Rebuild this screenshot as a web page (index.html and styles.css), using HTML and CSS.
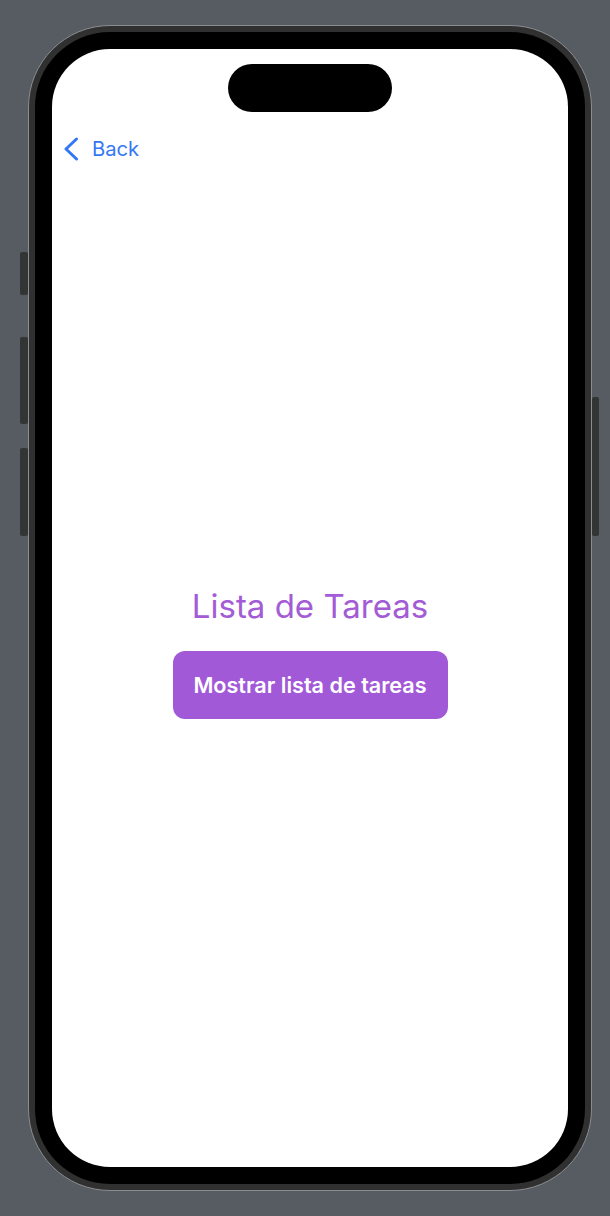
FILE: index.html
```html
<!DOCTYPE html>
<html lang="es">
<head>
<meta charset="utf-8">
<title>Lista de Tareas</title>
<link rel="stylesheet" href="styles.css">
</head>
<body>
<div class="stage">
  <div class="phone">
    <span class="side-btn btn-action"></span>
    <span class="side-btn btn-vol-up"></span>
    <span class="side-btn btn-vol-down"></span>
    <span class="side-btn btn-power"></span>
    <div class="bezel">
      <div class="screen">
        <div class="island"></div>
        <nav class="nav">
          <a class="back" href="#">
            <svg class="chevron" width="16" height="24" viewBox="0 0 16 24" aria-hidden="true">
              <polyline points="13.5,2 3,12 13.5,22" fill="none" stroke="currentColor" stroke-width="3" stroke-linecap="round" stroke-linejoin="round"/>
            </svg>
            <span>Back</span>
          </a>
        </nav>
        <main class="content">
          <h1 class="title">Lista de Tareas</h1>
          <button class="show-btn" type="button">Mostrar lista de tareas</button>
        </main>
      </div>
    </div>
  </div>
</div>
</body>
</html>
```

FILE: styles.css
```css
* { box-sizing: border-box; }

html, body {
  margin: 0;
  padding: 0;
  background: #575c63;
  width: 610px;
  height: 1216px;
  overflow: hidden;
  font-family: Inter, "Noto Sans", "Liberation Sans", sans-serif;
}

.stage {
  padding: 25px 0 0 28px;
}

.phone {
  position: relative;
  width: 564px;
  height: 1166px;
  border: 1px solid #8b8d90;
  border-radius: 82px;
  background: #303030;
  padding: 6px;
}

.side-btn {
  position: absolute;
  background: #333434;
  border-radius: 2px;
}
.btn-action { left: -9px; top: 226px; width: 8px; height: 43px; }
.btn-vol-up { left: -9px; top: 311px; width: 8px; height: 87px; }
.btn-vol-down { left: -9px; top: 422px; width: 8px; height: 88px; }
.btn-power { right: -8px; top: 371px; width: 7px; height: 139px; }

.bezel {
  width: 100%;
  height: 100%;
  background: #000;
  border-radius: 75px;
  padding: 17px;
}

.screen {
  position: relative;
  width: 100%;
  height: 100%;
  background: #fff;
  border-radius: 58px;
  overflow: hidden;
  display: flex;
  flex-direction: column;
}

.island {
  position: absolute;
  left: 176px;
  top: 15px;
  width: 164px;
  height: 48px;
  border-radius: 24px;
  background: #000;
}

.nav {
  padding: 88px 0 0 11px;
  height: 113px;
}

.back {
  display: inline-flex;
  align-items: center;
  gap: 13px;
  color: #3478f6;
  text-decoration: none;
  font-size: 20.2px;
  line-height: 24px;
}

.chevron { display: block; }

.content {
  display: flex;
  flex-direction: column;
  align-items: center;
  padding-top: 423px;
}

.title {
  margin: 0;
  font-size: 33px;
  font-weight: 400;
  line-height: 42px;
  color: #a35bd6;
  letter-spacing: 0;
}

.show-btn {
  margin-top: 24px;
  width: 275px;
  height: 68px;
  border: 0;
  border-radius: 12px;
  background: #a259d8;
  color: #fff;
  font-family: inherit;
  font-size: 21.6px;
  font-weight: 600;
  padding: 0;
}
```
